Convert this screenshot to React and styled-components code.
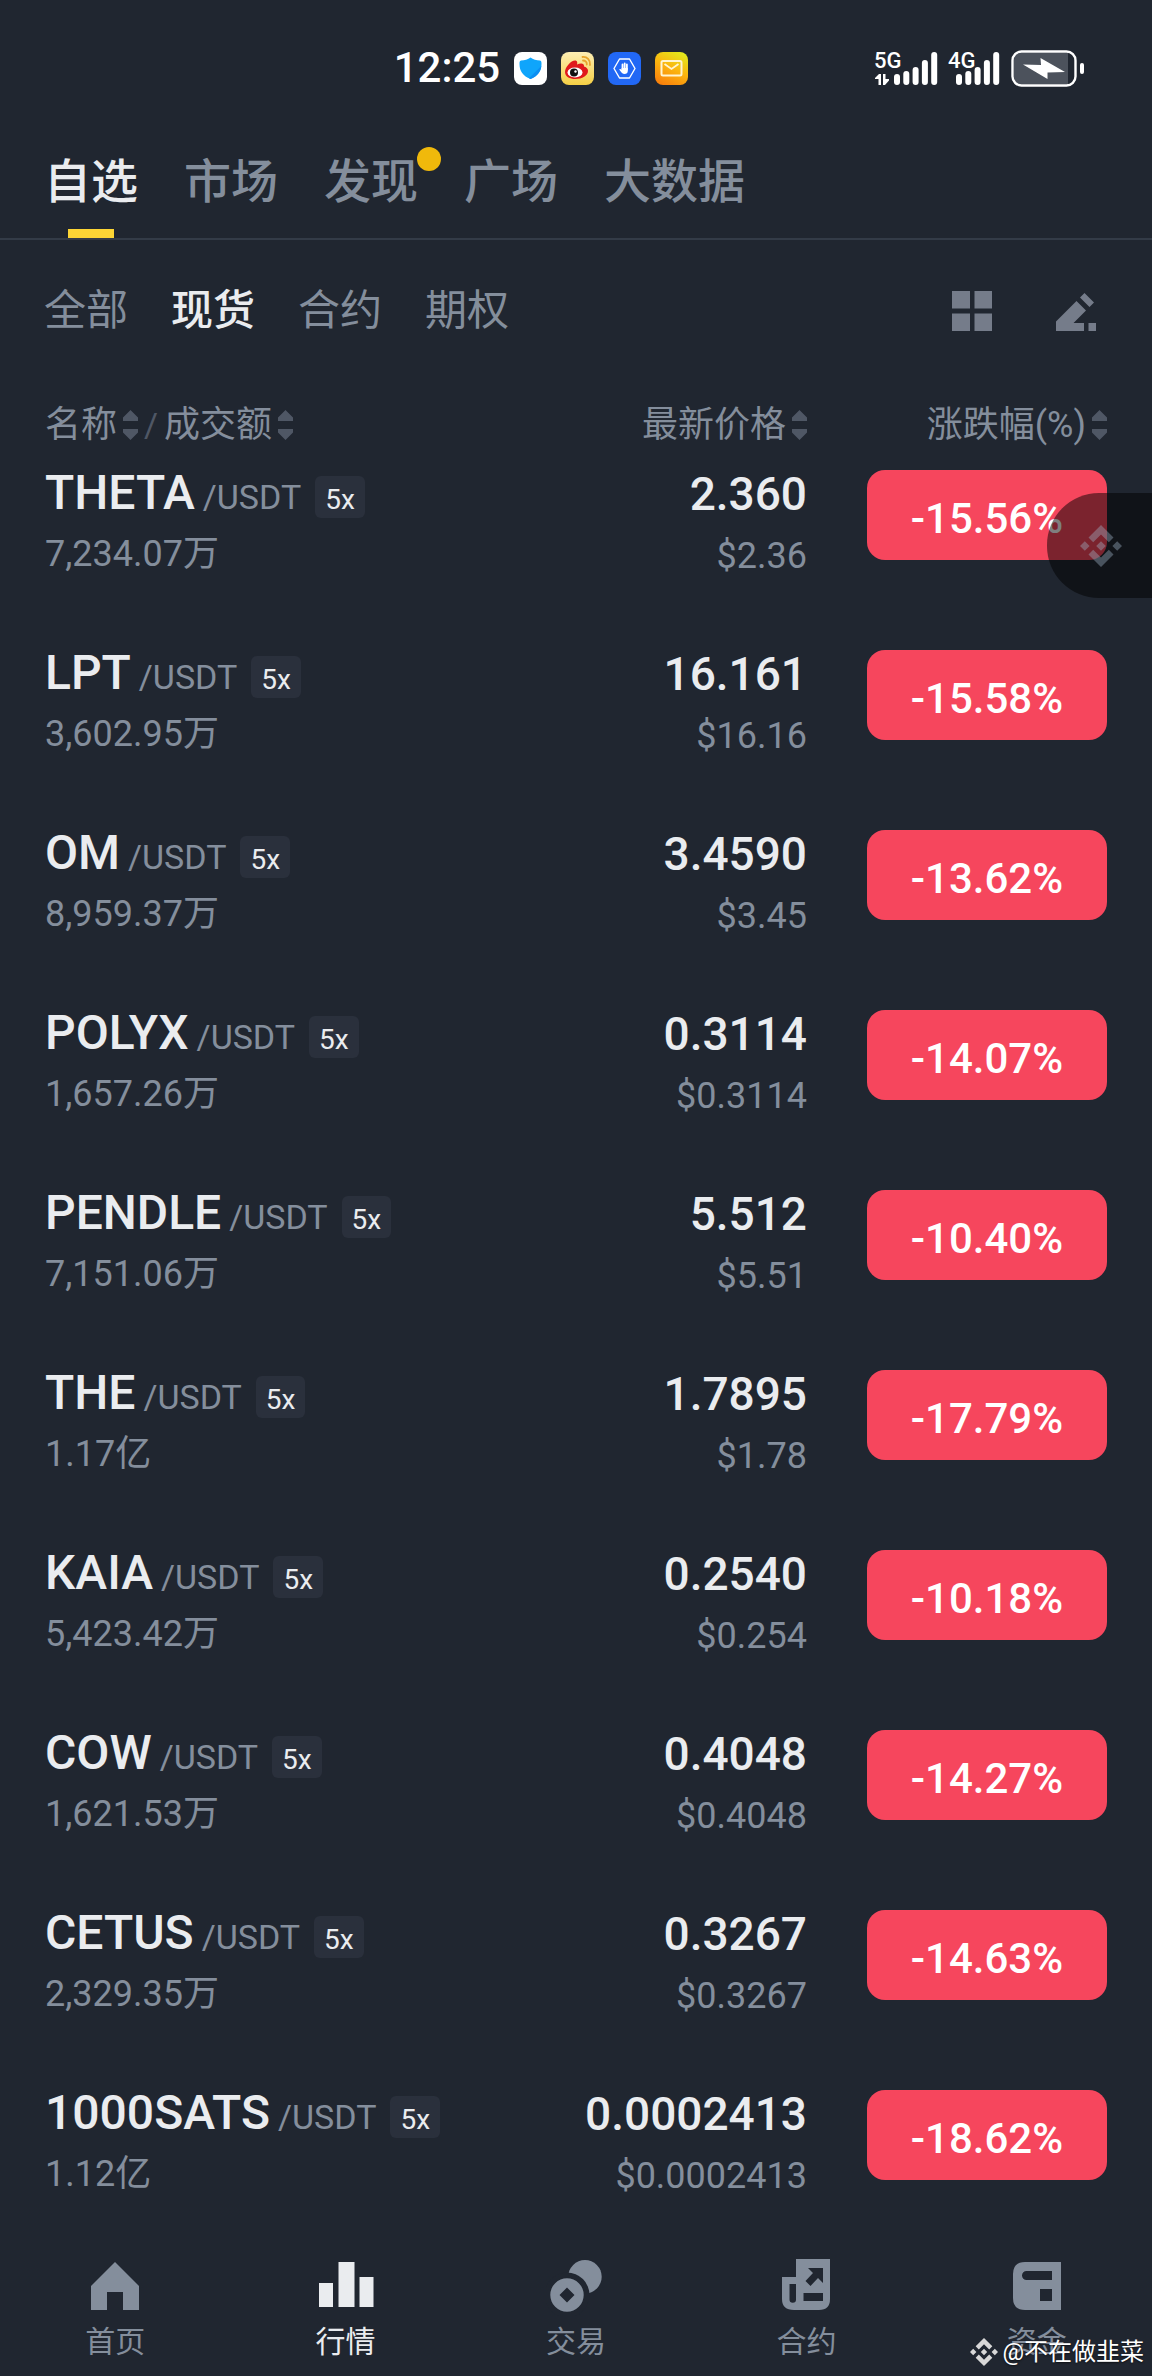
import { useState } from 'react';

//import Styles
import styled, { createGlobalStyle } from 'styled-components';

//Data
const tabs = [
  { name: '自选' },
  { name: '市场' },
  { name: '发现', dot: true },
  { name: '广场' },
  { name: '大数据' },
];

const filters = ['全部', '现货', '合约', '期权'];

const coins = [
  { name: 'THETA', volume: '7,234.07万', price: '2.360', usd: '$2.36', change: '-15.56%' },
  { name: 'LPT', volume: '3,602.95万', price: '16.161', usd: '$16.16', change: '-15.58%' },
  { name: 'OM', volume: '8,959.37万', price: '3.4590', usd: '$3.45', change: '-13.62%' },
  { name: 'POLYX', volume: '1,657.26万', price: '0.3114', usd: '$0.3114', change: '-14.07%' },
  { name: 'PENDLE', volume: '7,151.06万', price: '5.512', usd: '$5.51', change: '-10.40%' },
  { name: 'THE', volume: '1.17亿', price: '1.7895', usd: '$1.78', change: '-17.79%' },
  { name: 'KAIA', volume: '5,423.42万', price: '0.2540', usd: '$0.254', change: '-10.18%' },
  { name: 'COW', volume: '1,621.53万', price: '0.4048', usd: '$0.4048', change: '-14.27%' },
  { name: 'CETUS', volume: '2,329.35万', price: '0.3267', usd: '$0.3267', change: '-14.63%' },
  { name: '1000SATS', volume: '1.12亿', price: '0.0002413', usd: '$0.0002413', change: '-18.62%' },
];

//Status bar icons
const ShieldIcon = () => (
  <svg width='33' height='33' viewBox='0 0 33 33'>
    <rect width='33' height='33' rx='8' fill='#fff' />
    <path
      d='M16.500 5.500C19 7.500 22.500 8.500 26 8.500C27.500 9 27.500 10 27.500 12C27.500 19 24 24 16.500 27C9 24 5.500 19 5.500 12C5.500 10 5.500 9 7 8.500C10.500 8.500 14 7.500 16.500 5.500Z'
      fill='#0fa5fb'
    />
    <path d='M27.300 14C26.500 20 23 24.500 16.500 27L15 26.300Z' fill='#0b8ef2' />
  </svg>
);

const WeiboIcon = () => (
  <svg width='33' height='33' viewBox='0 0 33 33'>
    <defs>
      <linearGradient id='weibo' x1='0' y1='0' x2='0' y2='1'>
        <stop offset='0' stopColor='#fdeeb4' />
        <stop offset='1' stopColor='#f5cf45' />
      </linearGradient>
    </defs>
    <rect width='33' height='33' rx='8' fill='url(#weibo)' />
    <path
      d='M4 20C4 15 10 8.500 14 8.500C16.500 8.500 16.500 11 16 12.500C19 11 23.500 10.500 23 14.500C26 15.500 27 17 27 19C27 23.500 21 27 14.500 27C8.500 27 4 24.500 4 20Z'
      fill='#e0191c'
    />
    <ellipse cx='14' cy='20.500' rx='7.500' ry='5' fill='#fff' />
    <circle cx='13' cy='20.500' r='4' fill='#111' />
    <circle cx='14.500' cy='19.500' r='1.200' fill='#fff' />
    <path
      d='M21.500 5C26 4.500 29.500 8 29 13M22 8.500C24.500 8.500 26 10 25.800 12.500'
      fill='none'
      stroke='#e8a52c'
      strokeWidth='1.800'
      strokeLinecap='round'
    />
  </svg>
);

const HandIcon = () => (
  <svg width='33' height='33' viewBox='0 0 33 33'>
    <rect width='33' height='33' rx='8' fill='#2268f5' />
    <path
      d='M11.500 7H21.500L27 16.500L21.500 26H11.500L6 16.500Z'
      fill='none'
      stroke='#fff'
      strokeWidth='1.400'
      strokeLinejoin='round'
    />
    <path
      d='M14.500 18V12.500M16.700 17V11.500M18.900 17.500V12.500'
      stroke='#fff'
      strokeWidth='1.800'
      strokeLinecap='round'
    />
    <path d='M13.600 16H19.800V19C19.800 21 18.500 22 16.500 22C14.500 22 13.500 20.500 11.200 17.500C11.500 16.500 13 16.800 13.600 18Z' fill='#fff' />
  </svg>
);

const MailIcon = () => (
  <svg width='33' height='33' viewBox='0 0 33 33'>
    <defs>
      <linearGradient id='mail' x1='0.8' y1='0' x2='0.3' y2='1'>
        <stop offset='0' stopColor='#e2ea1c' />
        <stop offset='0.5' stopColor='#fbb50f' />
        <stop offset='1' stopColor='#f9820c' />
      </linearGradient>
    </defs>
    <rect width='33' height='33' rx='8' fill='url(#mail)' />
    <rect x='6.500' y='9' width='20' height='14.500' rx='1.500' fill='none' stroke='#fff4d0' strokeWidth='2' />
    <path d='M9.500 12L16.500 17L23.500 12' fill='none' stroke='#fff4d0' strokeWidth='1.800' />
  </svg>
);

const barTops = [25, 22, 18, 11, 3];

const Signal = ({ label, start, arrows }) => (
  <svg width={start + 44} height='38' viewBox={`0 0 ${start + 44} 38`} fill='#fff'>
    <SignalText x='0' y='19'>
      {label}
    </SignalText>
    {arrows && <path d='M1 29L5 25H7V36H4.500V30H1ZM9 25H11.500V30H15V31.500L11 36H9Z' />}
    {barTops.map((top, i) => (
      <rect key={top} x={start + i * 9.3} y={top} width='6' height={36 - top} rx='3' />
    ))}
  </svg>
);

const BatteryIcon = () => (
  <svg width='74' height='38' viewBox='0 0 74 38'>
    <path d='M11 4H58V35H11Q4 35 4 28V11Q4 4 11 4Z' fill='#4c525c' />
    <rect x='2.500' y='2.500' width='63' height='34' rx='9' fill='none' stroke='#fff' strokeWidth='2.400' />
    <rect x='70' y='14' width='4' height='11' rx='2' fill='#fff' />
    <path d='M13 15.500L31 16L30.500 9L55 23L37.500 23.500V30Z' fill='#fff' />
  </svg>
);

//Page icons
const GridIcon = () => (
  <svg width='40' height='40' viewBox='0 0 40 40' fill='currentColor'>
    <path d='M0 0H18V17.500H0ZM22.500 0H40V17.500H22.500ZM0 22.500H18V40H0ZM22.500 22.500H40V40H22.500Z' />
  </svg>
);

const EditIcon = () => (
  <svg width='40' height='40' viewBox='0 0 40 40' fill='currentColor'>
    <path d='M0 30.500L20.500 10L30 19.500L17.500 32H28V40H0ZM24 6.500L28.500 2L38 11.500L33.500 16ZM32.500 32H40V40H32.500Z' />
  </svg>
);

const SortIcon = () => (
  <svg width='15' height='30' viewBox='0 0 15 30' fill='#4f5765'>
    <path d='M7.500 0L15 7.500V11H0V7.500ZM0 19H15V22.500L7.500 30L0 22.500Z' />
  </svg>
);

const DiamondLogo = ({ size }) => (
  <svg width={size} height={size} viewBox='0 0 42 42' fill='currentColor'>
    <path d='M21 0L33.500 12.500L28.800 17.200L21 9.400L13.200 17.200L8.500 12.500Z' />
    <path d='M21 42L33.500 29.500L28.800 24.800L21 32.600L13.200 24.800L8.500 29.500Z' />
    <path d='M21 16.200L25.800 21L21 25.800L16.200 21ZM4.800 16.200L9.600 21L4.800 25.800L0 21ZM37.200 16.200L42 21L37.200 25.800L32.400 21Z' />
  </svg>
);

//Bottom navigation icons
const HomeIcon = () => <path d='M30 6L54 30V54H38V36H22V54H6V30Z' />;

const MarketIcon = () => <path d='M3 27H17V51H3ZM22.500 6H38.500V51H22.500ZM43.500 21H57.500V51H43.500Z' />;

const TradeIcon = () => (
  <>
    <circle cx='39' cy='20.700' r='16.700' />
    <circle cx='21' cy='39' r='22.500' fill='#202630' />
    <path
      fillRule='evenodd'
      d='M21 22.300A16.700 16.700 0 1 1 21 55.700A16.700 16.700 0 1 1 21 22.300ZM21 31.500L13.500 39L21 46.500L28.500 39Z'
    />
  </>
);

const FuturesIcon = () => (
  <path
    fillRule='evenodd'
    d='M20 3H54V43Q54 54 43 54H18Q6 54 6 43V21H20ZM13.500 28V43.500A3.200 3.200 0 0 0 20 43.500V28ZM27.500 37V45H47V37ZM32 12L37 17L29.500 25L34.500 30L42 22L47 27V12Z'
  />
);

const WalletIcon = () => (
  <path
    fillRule='evenodd'
    d='M18 6H54V54H18Q6 54 6 42V18Q6 6 18 6ZM19.500 15A4.500 4.500 0 0 0 19.500 24H45V15ZM33 33V45H45V33Z'
  />
);

const navItems = [
  { name: '首页', icon: <HomeIcon /> },
  { name: '行情', icon: <MarketIcon />, active: true },
  { name: '交易', icon: <TradeIcon /> },
  { name: '合约', icon: <FuturesIcon /> },
  { name: '资金', icon: <WalletIcon /> },
];

//Component
const App = () => {
  const [tab, setTab] = useState('自选');
  const [filter, setFilter] = useState('现货');

  return (
    <Page>
      <GlobalStyle />
      <StatusBar>
        <StatusGroup $gap={14}>
          <Time>12:25</Time>
          <ShieldIcon />
          <WeiboIcon />
          <HandIcon />
          <MailIcon />
        </StatusGroup>
        <StatusGroup $gap={10}>
          <Signal label='5G' start={20} arrows />
          <Signal label='4G' start={8} />
          <BatteryIcon />
        </StatusGroup>
      </StatusBar>

      <TabBar>
        {tabs.map(({ name, dot }) => (
          <Tab key={name} $active={name === tab} onClick={() => setTab(name)}>
            {name}
            {dot && <Dot />}
          </Tab>
        ))}
      </TabBar>

      <FilterBar>
        {filters.map((name) => (
          <Filter key={name} $active={name === filter} onClick={() => setFilter(name)}>
            {name}
          </Filter>
        ))}
        <Tools>
          <ToolButton aria-label='布局'>
            <GridIcon />
          </ToolButton>
          <ToolButton aria-label='编辑'>
            <EditIcon />
          </ToolButton>
        </Tools>
      </FilterBar>

      <List>
        <Table>
          <thead>
            <tr>
              <HeadCell>
                <HeadContent>
                  <SortButton>
                    名称
                    <SortIcon />
                  </SortButton>
                  <Slash>/</Slash>
                  <SortButton>
                    成交额
                    <SortIcon />
                  </SortButton>
                </HeadContent>
              </HeadCell>
              <HeadCell>
                <HeadContent $end>
                  <SortButton>
                    最新价格
                    <SortIcon />
                  </SortButton>
                </HeadContent>
              </HeadCell>
              <HeadCell $change>
                <HeadContent $end>
                  <SortButton>
                    涨跌幅(%)
                    <SortIcon />
                  </SortButton>
                </HeadContent>
              </HeadCell>
            </tr>
          </thead>
          <tbody>
            {coins.map((coin) => (
              <Row key={coin.name}>
                <Cell>
                  <Pair>
                    <Name>{coin.name}</Name>
                    <Quote>/USDT</Quote>
                    <Leverage>5x</Leverage>
                  </Pair>
                  <Volume>{coin.volume}</Volume>
                </Cell>
                <Cell $end>
                  <Price>{coin.price}</Price>
                  <Usd>{coin.usd}</Usd>
                </Cell>
                <Cell $end>
                  <Change>{coin.change}</Change>
                </Cell>
              </Row>
            ))}
          </tbody>
        </Table>
      </List>

      <BottomNav>
        {navItems.map(({ name, icon, active }) => (
          <NavLink key={name} href='#' $active={active}>
            <svg width='60' height='60' viewBox='0 0 60 60' fill='currentColor'>
              {icon}
            </svg>
            {name}
          </NavLink>
        ))}
      </BottomNav>

      <FloatButton aria-label='悬浮窗'>
        <DiamondLogo size={42} />
      </FloatButton>
      <Credit>
        <DiamondLogo size={28} />
        <span>@不在做韭菜</span>
      </Credit>
    </Page>
  );
};

//Styles
const GlobalStyle = createGlobalStyle`
  * {
    margin: 0;
    padding: 0;
    box-sizing: border-box;
  }
  body {
    background: #202630;
    color: #eaecef;
    font-family: Roboto, 'Noto Sans CJK SC', sans-serif;
  }
  button {
    background: none;
    border: none;
    color: inherit;
    font: inherit;
    cursor: pointer;
  }
  svg {
    display: block;
    flex-shrink: 0;
  }
`;

const Page = styled.div`
  position: relative;
  display: flex;
  flex-direction: column;
  min-height: 100vh;
  overflow: hidden;
`;

const StatusBar = styled.div`
  display: flex;
  align-items: center;
  justify-content: space-between;
  height: 136px;
  padding: 0 68px 0 34%;
`;
const StatusGroup = styled.div`
  display: flex;
  align-items: center;
  gap: ${({ $gap }) => $gap}px;
`;
const Time = styled.span`
  padding-left: 2px;
  color: white;
  font-size: 42px;
  font-weight: 500;
  line-height: 48px;
`;
const SignalText = styled.text`
  font-size: 22px;
  font-weight: 500;
`;

const TabBar = styled.nav`
  display: flex;
  gap: 46px;
  padding: 0 44px;
  border-bottom: 2px solid #333b47;
`;
const Tab = styled.button`
  position: relative;
  padding: 22px 0 32px;
  color: ${({ $active }) => ($active ? '#eaecef' : '#848e9c')};
  font-size: 47px;
  font-weight: 500;
  line-height: 48px;
  &::after {
    content: '';
    display: ${({ $active }) => ($active ? 'block' : 'none')};
    position: absolute;
    left: 50%;
    bottom: 0;
    width: 46px;
    height: 9px;
    margin-left: -23px;
    background: #fcd535;
  }
`;
const Dot = styled.span`
  position: absolute;
  top: 11px;
  right: -23px;
  width: 24px;
  height: 24px;
  border-radius: 50%;
  background: #f0b90b;
`;

const FilterBar = styled.div`
  display: flex;
  align-items: center;
  gap: 43px;
  padding: 50px 44px 0;
`;
const Filter = styled.button`
  color: ${({ $active }) => ($active ? '#eaecef' : '#848e9c')};
  font-size: 42px;
  font-weight: ${({ $active }) => ($active ? 500 : 400)};
  line-height: 42px;
`;
const Tools = styled.div`
  display: flex;
  gap: 64px;
  margin-left: auto;
  padding-right: 12px;
`;
const ToolButton = styled.button`
  color: #757c8a;
`;

const List = styled.main`
  padding: 0 45px;
`;
const Table = styled.table`
  width: 100%;
  border-collapse: collapse;
`;
const HeadCell = styled.th`
  width: ${({ $change }) => ($change ? '300px' : 'auto')};
  padding: 73px 0 25px;
  color: #848e9c;
  font-size: 36px;
  font-weight: 400;
  line-height: 40px;
`;
const HeadContent = styled.div`
  display: flex;
  justify-content: ${({ $end }) => ($end ? 'flex-end' : 'flex-start')};
  gap: 6px;
`;
const SortButton = styled.button`
  display: flex;
  align-items: center;
  gap: 6px;
  white-space: nowrap;
`;
const Slash = styled.span`
  color: #4f5765;
  font-size: 34px;
`;

const Row = styled.tr`
  height: 180px;
  &:last-child {
    height: auto;
  }
`;
const Cell = styled.td`
  text-align: ${({ $end }) => ($end ? 'right' : 'left')};
  vertical-align: top;
`;
const Pair = styled.div`
  display: flex;
  align-items: baseline;
  gap: 8px;
`;
const Name = styled.strong`
  font-size: 48px;
  font-weight: 500;
  line-height: 46px;
`;
const Quote = styled.span`
  margin-right: 6px;
  color: #848e9c;
  font-size: 34px;
  line-height: 40px;
`;
const Leverage = styled.span`
  padding: 10px 10px 4px;
  border-radius: 6px;
  background: #2a303c;
  font-size: 28px;
  line-height: 28px;
`;
const Volume = styled.p`
  padding-top: 12px;
  color: #848e9c;
  font-size: 36px;
  line-height: 48px;
`;
const Price = styled.p`
  font-size: 46px;
  font-weight: 500;
  line-height: 48px;
`;
const Usd = styled.p`
  padding-top: 14px;
  color: #848e9c;
  font-size: 36px;
  line-height: 48px;
`;
const Change = styled.div`
  width: 240px;
  margin-left: auto;
  padding: 25px 0 17px;
  border-radius: 18px;
  background: #f6465d;
  color: white;
  font-size: 42px;
  font-weight: 500;
  line-height: 48px;
  text-align: center;
`;

const BottomNav = styled.nav`
  display: flex;
  margin-top: auto;
  padding-bottom: 16px;
`;
const NavLink = styled.a`
  display: flex;
  flex: 1;
  flex-direction: column;
  align-items: center;
  gap: 8px;
  color: ${({ $active }) => ($active ? '#eaecef' : '#848e9c')};
  font-size: 30px;
  line-height: 36px;
  text-decoration: none;
`;

const FloatButton = styled.button`
  position: absolute;
  top: 493px;
  right: 0;
  padding: 32px 30px 31px 33px;
  border-radius: 52px 0 0 52px;
  background: rgba(0, 0, 0, 0.5);
  && {
    color: rgba(160, 180, 200, 0.4);
  }
`;
const Credit = styled.div`
  position: absolute;
  right: 8px;
  bottom: 8px;
  display: flex;
  align-items: center;
  gap: 4px;
  color: white;
  font-size: 24px;
  line-height: 32px;
  text-shadow: 0 1px 2px rgba(0, 0, 0, 0.6);
  svg {
    color: #d8d8d8;
  }
`;

export default App;
